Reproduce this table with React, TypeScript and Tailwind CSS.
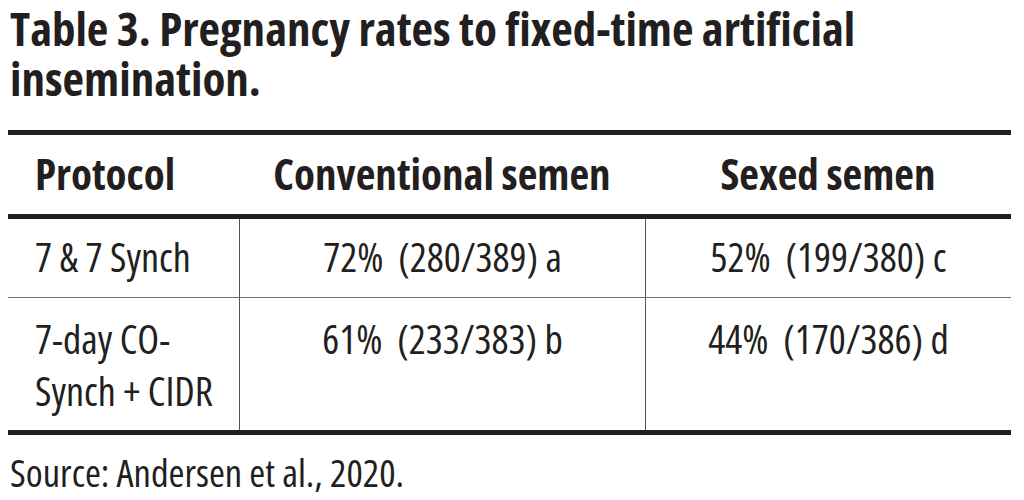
const rows = [
  { protocol: ['7 & 7 Synch'], conv: '72%  (280/389) a', sexed: '52%  (199/380) c' },
  { protocol: ['7-day CO-', 'Synch + CIDR'], conv: '61%  (233/383) b', sexed: '44%  (170/386) d' },
]

export default function App() {
  return (
    <div className="w-[1024px] h-[500px] bg-white text-[#231f20] font-['Open_Sans',sans-serif] font-stretch-condensed overflow-hidden">
      <h1 className="pl-[10px] pt-[3px] text-[47px] leading-[50px] font-bold">
        Table 3. Pregnancy rates to fixed-time artificial
        <br />
        insemination.
      </h1>

      <div className="mt-[27px] ml-[8px] w-[1003px]">
        <div className="h-[5px] bg-[#231f20]" />
        <div className="grid grid-cols-[231px_406px_366px] h-[79px] items-center text-[43px] font-bold">
          <div className="pl-[27px]">Protocol</div>
          <div className="text-center">Conventional semen</div>
          <div className="text-center">Sexed semen</div>
        </div>
        <div className="h-[5px] bg-[#231f20]" />

        {rows.map((r, i) => (
          <div
            key={i}
            className={
              i < rows.length - 1
                ? 'grid grid-cols-[231px_406px_366px] text-[40px] leading-[52px] border-b border-[#6d6d6d]'
                : 'grid grid-cols-[231px_406px_366px] text-[40px] leading-[52px]'
            }
          >
            <div className={i === 0 ? 'pl-[27px] pt-[12px] pb-[14px]' : 'pl-[27px] pt-[15px] pb-[13px]'}>
              {r.protocol.map((p) => (
                <div key={p}>{p}</div>
              ))}
            </div>
            <div className={i === 0 ? 'border-l border-[#555] text-center whitespace-pre pt-[12px]' : 'border-l border-[#555] text-center whitespace-pre pt-[15px]'}>
              {r.conv}
            </div>
            <div className={i === 0 ? 'border-l border-[#555] text-center whitespace-pre pt-[12px]' : 'border-l border-[#555] text-center whitespace-pre pt-[15px]'}>
              {r.sexed}
            </div>
          </div>
        ))}
        <div className="h-[5px] bg-[#231f20]" />
      </div>

      <p className="pl-[10px] pt-[15px] text-[38.5px] leading-[44px]">Source: Andersen et al., 2020.</p>
    </div>
  )
}
